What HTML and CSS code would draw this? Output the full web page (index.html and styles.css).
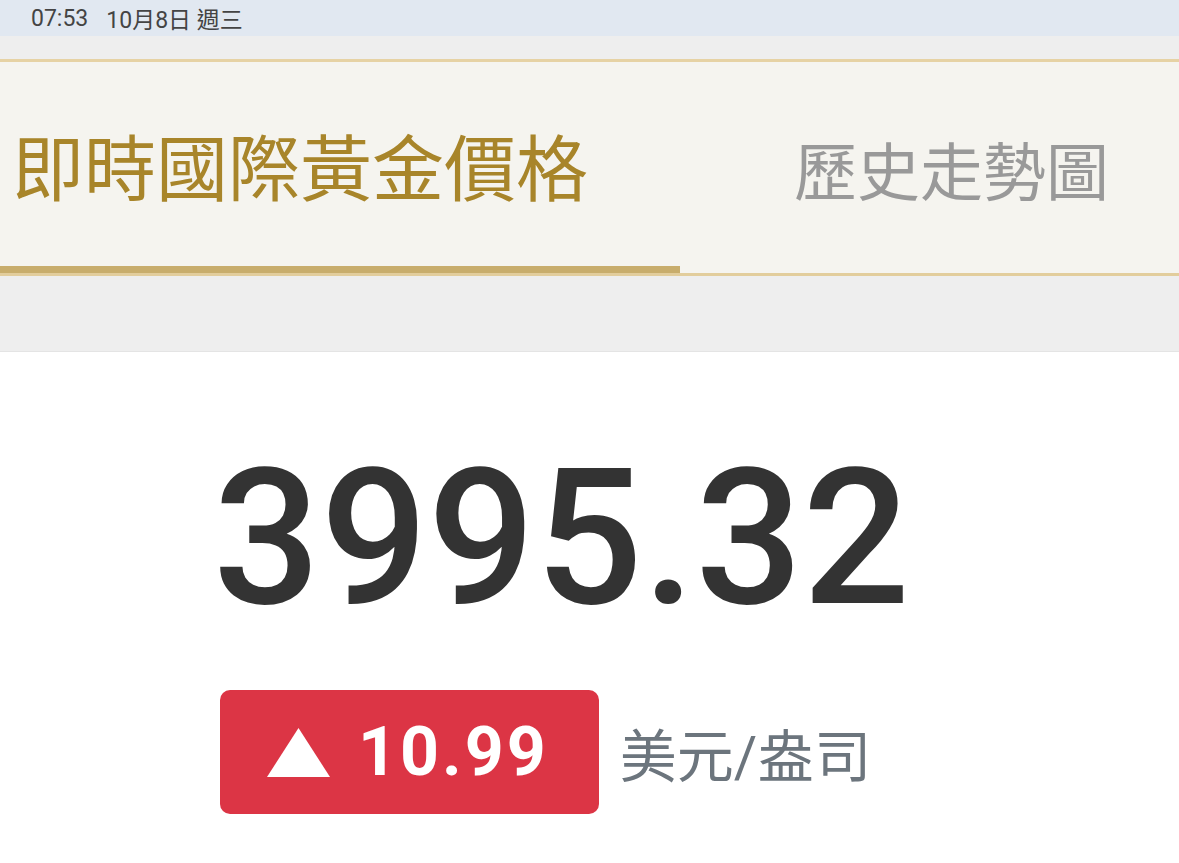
FILE: index.html
```html
<!DOCTYPE html>
<html lang="zh-Hant">

<head>
    <meta charset="UTF-8">
    <meta name="viewport" content="width=device-width, initial-scale=1.0">
    <title>即時國際黃金價格</title>
    <link rel="stylesheet" href="styles.css">
</head>

<body>
    <div class="status_bar">
        <span class="clock">07:53</span>
        <span>10月8日 週三</span>
    </div>
    <div class="top_gap"></div>
    <div class="tabs">
        <div class="tab active">即時國際黃金價格</div>
        <div class="tab">歷史走勢圖</div>
    </div>
    <div class="band"></div>
    <div class="price_box">
        <div class="price">3995.32</div>
        <div class="change_row">
            <div class="badge">
                <svg class="arrow" width="63" height="49" viewBox="0 0 63 49">
                    <polygon points="31.5,0 63,49 0,49" fill="#fff" />
                </svg>
                <span class="change">10.99</span>
            </div>
            <span class="unit">美元/盎司</span>
        </div>
    </div>
</body>

</html>
```

FILE: styles.css
```css
body {
    margin: 0;
    background: #fff;
    font-family: Roboto, "Noto Sans CJK TC", sans-serif;
}

.status_bar {
    height: 36px;
    background: #e1e8f1;
    display: flex;
    align-items: center;
    padding-left: 31px;
    font-size: 23px;
    color: #444;
}

.clock {
    margin-right: 18px;
}

.top_gap {
    height: 23px;
    background: #eeeeee;
}

.tabs {
    display: flex;
    height: 211px;
    background: #f5f4ef;
    border-top: 3px solid #e6d2a4;
    border-bottom: 3px solid #e2cd9c;
}

.tab {
    display: flex;
    align-items: center;
    flex: 1;
    padding-left: 114px;
    font-size: 63px;
    color: #999999;
}

.tab.active {
    flex: 0 0 680px;
    box-sizing: border-box;
    padding-left: 12px;
    padding-bottom: 2px;
    font-size: 72px;
    color: #a8852a;
    border-bottom: 7px solid #c8ad6c;
}

.band {
    height: 75px;
    background: #eeeeee;
    border-bottom: 1px solid #e4e4e4;
}

.price_box {
    padding: 92px 0 0 213px;
}

.price {
    font-size: 189px;
    line-height: 1;
    font-weight: 500;
    color: #333333;
}

.change_row {
    display: flex;
    align-items: center;
    margin-top: 57px;
}

.badge {
    display: flex;
    align-items: center;
    height: 124px;
    box-sizing: border-box;
    padding: 0 50px 0 47px;
    margin-left: 7px;
    background: #dc3545;
    border-radius: 10px;
}

.arrow {
    margin-right: 28px;
}

.change {
    font-size: 68px;
    font-weight: 700;
    letter-spacing: 3px;
    color: #fff;
    line-height: 1;
}

.unit {
    margin-left: 21px;
    font-size: 57px;
    color: #6c757d;
}
```
